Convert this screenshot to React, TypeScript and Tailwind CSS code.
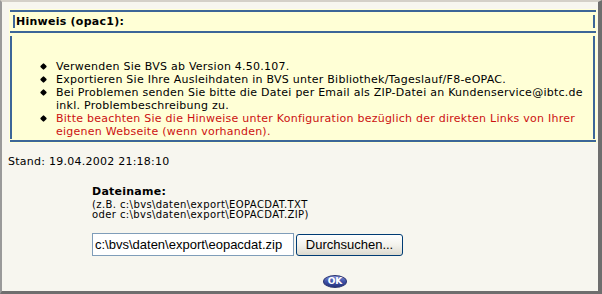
export default function App() {
  const blue = "bg-[#3c6698]"
  return (
    <div className="w-[602px] h-[294px] bg-[#f7f6ef] border-l-2 border-t-2 border-r-4 border-b-[3px] border-l-[#9a9a9a] border-t-[#d4d0c8] border-r-[#6e6e6e] border-b-[#6e6e6e] font-['DejaVu_Sans',sans-serif] text-[11px] tracking-[0.25px] text-black overflow-hidden">
      <div className="pl-[7px] pt-[7px]">
        {/* Hinweis box */}
        <div className="w-[588px] bg-[#ffffd6] pt-[1px] pb-[1px]">
          <div className={`h-[2px] mx-[1px] ${blue}`} />
          <div className="mt-[3px] ml-[4px] mr-[2px] h-[13px] border-l-2 border-r-2 border-[#3c6698] pl-[1px] leading-[13px] font-bold">
            Hinweis (opac1):
          </div>
          <div className={`mt-[3px] h-[2px] mx-[1px] ${blue}`} />
          <div className="mt-[3px] ml-[1px] mr-[2px] border-l-2 border-r-2 border-[#3c6698] pt-[24px] pb-[1px] leading-[13px] whitespace-nowrap">
            <ul className="pl-[29px]">
              <Item>Verwenden Sie BVS ab Version 4.50.107.</Item>
              <Item>Exportieren Sie Ihre Ausleihdaten in BVS unter Bibliothek/Tageslauf/F8-eOPAC.</Item>
              <Item>
                Bei Problemen senden Sie bitte die Datei per Email als ZIP-Datei an Kundenservice@ibtc.de
                <br />
                inkl. Problembeschreibung zu.
              </Item>
              <Item red>
                Bitte beachten Sie die Hinweise unter Konfiguration bezüglich der direkten Links von Ihrer
                <br />
                eigenen Webseite (wenn vorhanden).
              </Item>
            </ul>
          </div>
          <div className={`mt-[1px] h-[2px] mx-[1px] ${blue}`} />
        </div>

        <div className="mt-[12px] -ml-[1px] leading-[13px]">Stand: 19.04.2002 21:18:10</div>

        {/* Dateiname */}
        <div className="ml-[83px] mt-[17px]">
          <div className="font-bold leading-[13px]">Dateiname:</div>
          <div className="text-[10px] tracking-[0.4px] leading-[10px] mt-[2px]">
            (z.B. c:\bvs\daten\export\EOPACDAT.TXT
            <br />
            oder c:\bvs\daten\export\EOPACDAT.ZIP)
          </div>
          <div className="flex items-center gap-[2px] mt-[13px] font-['Liberation_Sans',Arial,sans-serif] text-[13px] tracking-normal">
            <input
              readOnly
              value="c:\bvs\daten\export\eopacdat.zip"
              className="w-[202px] h-[23px] border border-[#7f9db9] bg-white px-[2px] text-[13px] outline-none"
            />
            <button className="h-[22px] w-[107px] rounded-[3px] border border-[#003c74] bg-gradient-to-b from-white via-[#f3f2ec] to-[#dcdad0] text-[13px] leading-[20px]">
              Durchsuchen...
            </button>
          </div>
          <div className="ml-[231px] mt-[19px] w-[24px] h-[13px] rounded-[50%] bg-gradient-to-b from-[#7f8fd6] via-[#4153a8] to-[#25337d] border border-[#2a3470] flex items-center justify-center">
            <span className="text-white font-bold text-[9px] leading-none tracking-normal">OK</span>
          </div>
        </div>
      </div>
    </div>
  )
}

function Item({ children, red }: { children: React.ReactNode; red?: boolean }) {
  return (
    <li className={`relative pl-[15px] ${red ? "text-[#cc1111]" : ""}`}>
      <span className="absolute left-0 top-[4px] w-[5px] h-[5px] bg-black rotate-45 rounded-[1px]" />
      {children}
    </li>
  )
}
